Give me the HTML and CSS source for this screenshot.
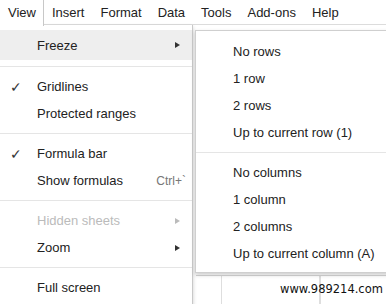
FILE: index.html
```html
<!DOCTYPE html>
<html>
<head>
<meta charset="utf-8">
<link rel="stylesheet" href="styles.css">
</head>
<body>
<div class="page">
  <div class="menubar">
    <div class="tab active">View</div>
    <div class="tab">Insert</div>
    <div class="tab">Format</div>
    <div class="tab">Data</div>
    <div class="tab">Tools</div>
    <div class="tab">Add-ons</div>
    <div class="tab">Help</div>
  </div>
  <div class="sheet">
    <div class="grid">
      <div class="gcol c1"></div><div class="gcol c2"></div><div class="gcol c3"></div>
    </div>
    <div class="watermark">www.989214.com</div>
  </div>
  <div class="menu">
    <div class="item hl"><span class="label">Freeze</span><span class="arrow"></span></div>
    <div class="sep"></div>
    <div class="item"><span class="check">✓</span><span class="label">Gridlines</span></div>
    <div class="item"><span class="label">Protected ranges</span></div>
    <div class="sep"></div>
    <div class="item"><span class="check">✓</span><span class="label">Formula bar</span></div>
    <div class="item"><span class="label">Show formulas</span><span class="kbd">Ctrl+`</span></div>
    <div class="sep"></div>
    <div class="item disabled"><span class="label">Hidden sheets</span><span class="arrow"></span></div>
    <div class="item"><span class="label">Zoom</span><span class="arrow"></span></div>
    <div class="sep"></div>
    <div class="item"><span class="label">Full screen</span></div>
  </div>
  <div class="submenu">
    <div class="item"><span class="label">No rows</span></div>
    <div class="item"><span class="label">1 row</span></div>
    <div class="item"><span class="label">2 rows</span></div>
    <div class="item"><span class="label">Up to current row (1)</span></div>
    <div class="sep"></div>
    <div class="item"><span class="label">No columns</span></div>
    <div class="item"><span class="label">1 column</span></div>
    <div class="item"><span class="label">2 columns</span></div>
    <div class="item"><span class="label">Up to current column (A)</span></div>
  </div>
</div>
</body>
</html>
```
FILE: styles.css
```css
html, body { margin: 0; padding: 0; }
body {
  width: 386px; height: 304px; overflow: hidden; background: #fff;
  font-family: "Liberation Sans", Arial, sans-serif; font-size: 13px; color: #222;
}
.page { position: relative; width: 386px; height: 304px; }
.menubar {
  display: flex; height: 25px; border-bottom: 1px solid #dcdcdc; box-sizing: border-box;
}
.tab { padding: 0 8px; line-height: 25px; font-size: 13px; color: #222; }
.tab.active {
  background: #fff; border-right: 1px solid #c8c8c8;
  position: relative; z-index: 3; height: 26px; padding-right: 7px;
}
.sheet { position: absolute; left: 0; top: 25px; right: 0; bottom: 0; }
.grid { position: absolute; left: 196px; top: 250px; right: 0; bottom: 0; border-top: 1px solid #d6d6d6; display: flex; }
.gcol { border-right: 1px solid #dedede; height: 100%; }
.c1 { width: 25px; }
.c2 { width: 97px; }
.watermark { position: absolute; left: 280px; top: 257px; color: #111; font-family: "DejaVu Sans", sans-serif; font-size: 11.5px; line-height: 14px; }
.menu {
  position: absolute; left: 0; top: 25px; width: 193px; height: 290px;
  background: #fff; border-right: 1px solid #c8c8c8; z-index: 2;
  box-shadow: 0 2px 4px rgba(0,0,0,0.2); padding-top: 5px; box-sizing: border-box;
}
.submenu {
  position: absolute; left: 195px; top: 30px; width: 200px;
  background: #fff; border: 1px solid #cfcfcf; z-index: 4;
  box-shadow: 0 2px 4px rgba(0,0,0,0.2); padding: 7px 0 5px; box-sizing: border-box;
}
.item { position: relative; display: flex; align-items: center; height: 27px; padding-left: 37px; padding-right: 10px; }
.item.hl { background: #eeeeee; height: 30px; }
.label { flex: 1; }
.check { position: absolute; left: 10px; font-size: 14px; color: #333; }
.arrow { width: 0; height: 0; border-left: 5px solid #333; border-top: 3.5px solid transparent; border-bottom: 3.5px solid transparent; margin-right: 2px; }
.disabled { color: #bbb; }
.disabled .arrow { border-left-color: #bbb; }
.kbd { color: #777; font-size: 12px; margin-right: -4px; }
.sep { height: 1px; background: #e5e5e5; margin: 6px 0; }
.submenu .sep { margin: 6px 0; }
```
